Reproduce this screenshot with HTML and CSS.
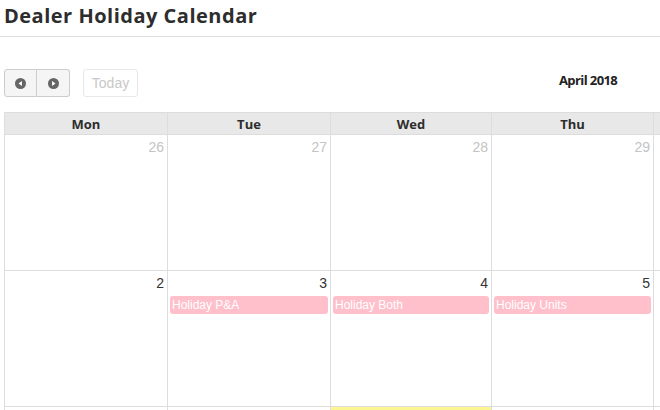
FILE: index.html
```html
<!DOCTYPE html>
<html lang="en">
  <head>
    <meta charset="UTF-8" />
    <meta name="viewport" content="width=device-width, initial-scale=1.0" />
    <title>Dealer Holiday Calendar</title>
    <link rel="stylesheet" href="styles.css">
  </head>
  <body>
    <div class="page">
      <h1 class="page-title">Dealer Holiday Calendar</h1>

      <div class="calendar">
        <div class="toolbar">
          <div class="toolbar-left">
            <div class="btn-group">
              <button class="btn" type="button">
                <svg width="11" height="11" viewBox="0 0 12 12">
                  <circle cx="6" cy="6" r="6" fill="#666" />
                  <path d="M7.6 3.2 L3.8 6 L7.6 8.8 Z" fill="#fff" />
                </svg>
              </button>
              <button class="btn" type="button">
                <svg width="11" height="11" viewBox="0 0 12 12">
                  <circle cx="6" cy="6" r="6" fill="#666" />
                  <path d="M4.4 3.2 L8.2 6 L4.4 8.8 Z" fill="#fff" />
                </svg>
              </button>
            </div>
            <button class="btn btn-today" type="button" disabled>Today</button>
          </div>
          <h2 class="month-title">April 2018</h2>
        </div>

        <table class="month">
          <colgroup>
            <col class="c-wide" /><col class="c-wide" /><col class="c-narrow" /><col class="c-mid" />
            <col class="c-mid" /><col class="c-mid" /><col class="c-mid" />
          </colgroup>
          <thead>
            <tr>
              <th>Mon</th><th>Tue</th><th>Wed</th><th>Thu</th><th>Fri</th><th>Sat</th><th>Sun</th>
            </tr>
          </thead>
          <tbody>
            <tr>
              <td class="other"><div class="day-num">26</div></td>
              <td class="other"><div class="day-num">27</div></td>
              <td class="other"><div class="day-num">28</div></td>
              <td class="other"><div class="day-num">29</div></td>
              <td class="other"><div class="day-num">30</div></td>
              <td class="other"><div class="day-num">31</div></td>
              <td><div class="day-num">1</div></td>
            </tr>
            <tr>
              <td><div class="day-num">2</div></td>
              <td>
                <div class="day-num">3</div>
                <div class="event">Holiday P&amp;A</div>
              </td>
              <td>
                <div class="day-num">4</div>
                <div class="event">Holiday Both</div>
              </td>
              <td>
                <div class="day-num">5</div>
                <div class="event">Holiday Units</div>
              </td>
              <td><div class="day-num">6</div></td>
              <td><div class="day-num">7</div></td>
              <td><div class="day-num">8</div></td>
            </tr>
            <tr>
              <td><div class="day-num">9</div></td>
              <td><div class="day-num">10</div></td>
              <td class="today"><div class="day-num">11</div></td>
              <td><div class="day-num">12</div></td>
              <td><div class="day-num">13</div></td>
              <td><div class="day-num">14</div></td>
              <td><div class="day-num">15</div></td>
            </tr>
          </tbody>
        </table>
      </div>
    </div>
  </body>
</html>
```

FILE: styles.css
```css
html,
body {
  margin: 0;
  overflow: hidden;
  background: #fff;
}
.page {
  width: 660px;
  height: 410px;
  overflow: hidden;
  font-family: "Liberation Sans", Arial, sans-serif;
  color: #333;
}
.page-title {
  margin: 0;
  padding: 2px 4px 0;
  height: 34px;
  border-bottom: 1px solid #ddd;
  font-family: "Open Sans", sans-serif;
  font-size: 20px;
  font-weight: 700;
  line-height: 27px;
  letter-spacing: 0.5px;
  color: #2d2d2d;
}
.calendar {
  padding: 32px 0 0 4px;
  width: 1140px;
}
.toolbar {
  display: flex;
  align-items: flex-start;
  height: 28px;
  margin-bottom: 15px;
}
.toolbar-left {
  display: flex;
  gap: 13px;
}
.btn-group {
  display: flex;
}
.btn {
  height: 28px;
  padding: 0 10px;
  border: 1px solid #ccc;
  background: #f5f5f5;
  font-family: "Liberation Sans", Arial, sans-serif;
  font-size: 14px;
  display: flex;
  align-items: center;
  justify-content: center;
}
.btn-group .btn {
  width: 33px;
  padding: 0;
}
.btn-group .btn:first-child {
  border-radius: 3px 0 0 3px;
}
.btn-group .btn:last-child {
  border-radius: 0 3px 3px 0;
  border-left: none;
}
.btn-today {
  width: 55px;
  border-color: #e8e8e8;
  background: #fff;
  border-radius: 3px;
  color: #c8c8c8;
}
.month-title {
  margin: 3px 0 0 421px;
  font-family: "Open Sans", sans-serif;
  font-size: 13px;
  font-weight: 700;
  letter-spacing: -0.6px;
  line-height: 16px;
  color: #222;
}
.month {
  width: 1136px;
  border-collapse: collapse;
  table-layout: fixed;
}
.c-wide {
  width: 163px;
}
.c-narrow {
  width: 161px;
}
.c-mid {
  width: 162px;
}
.month th,
.month td {
  border: 1px solid #ddd;
  padding: 0;
}
.month th {
  height: 21px;
  background: #e8e8e8;
  font-family: "Open Sans", sans-serif;
  font-size: 13px;
  font-weight: 700;
  color: #2d2d2d;
}
.month td {
  height: 135px;
  vertical-align: top;
}
.day-num {
  padding: 4px 3px 0 0;
  text-align: right;
  font-size: 14px;
  line-height: 16px;
}
.other .day-num {
  color: #c4c4c4;
}
.today {
  background: #fbf690;
  border-top-color: #e2da5e !important;
}
.event {
  margin: 5px 2px 0;
  height: 18px;
  padding: 0 2px;
  border-radius: 3px;
  background: pink;
  color: #fff;
  font-size: 12px;
  line-height: 18px;
}
```
